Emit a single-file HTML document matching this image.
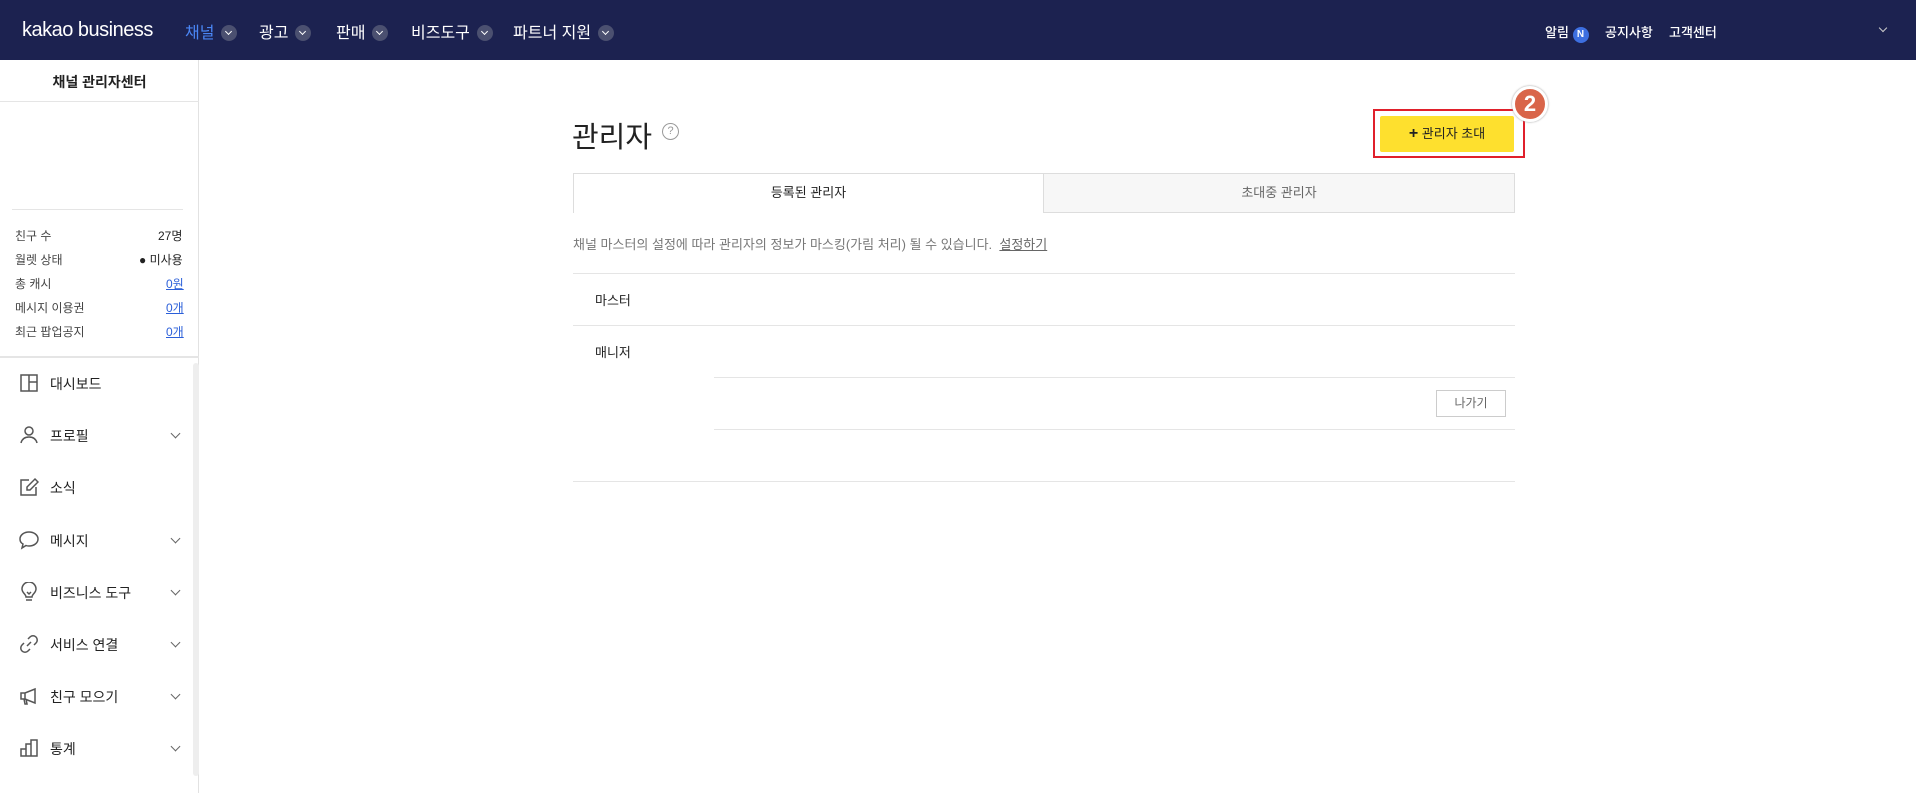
<!DOCTYPE html>
<html><head><meta charset="utf-8">
<style>
*{box-sizing:border-box;margin:0;padding:0}
body{width:1916px;height:793px;overflow:hidden;background:#fff;font-family:"Liberation Sans","Noto Sans CJK KR",sans-serif;color:#222;position:relative}
.a{position:absolute;white-space:nowrap}
.hdr{position:absolute;left:0;top:0;width:1916px;height:60px;background:#1c2250}
.nav{color:#fff;font-size:16px;top:19px;font-weight:normal}
.cv{display:inline-block;width:16px;height:16px;border-radius:50%;background:#4b5070;vertical-align:-3px;margin-left:7px;position:relative}
.cv:after{content:"";position:absolute;left:5px;top:4px;width:4px;height:4px;border-right:1.5px solid #fff;border-bottom:1.5px solid #fff;transform:rotate(45deg)}
.side{position:absolute;left:0;top:60px;width:199px;height:733px;border-right:1px solid #e2e2e2}
.hl{position:absolute;height:1px;background:#e5e5e5}
.st{font-size:12px;color:#444}
.sv{font-size:12px;color:#222;right:-0}
.u{color:#2b5fd9;text-decoration:underline}
.mi{font-size:14px;color:#222;left:50px;font-weight:normal}
.ic{position:absolute;left:19px;width:20px;height:20px}
.ch{position:absolute;left:172px;width:7px;height:7px;border-right:1.3px solid #666;border-bottom:1.3px solid #666;transform:rotate(45deg)}
</style></head><body>
<div class="hdr"></div>
<div class="a" style="left:22px;top:19px;font-size:20px;color:#fff;font-weight:500;letter-spacing:-0.5px">kakao business</div>
<div class="a nav" style="left:185px;color:#4a86f5">채널<span class="cv"></span></div>
<div class="a nav" style="left:259px">광고<span class="cv"></span></div>
<div class="a nav" style="left:336px">판매<span class="cv"></span></div>
<div class="a nav" style="left:411px">비즈도구<span class="cv"></span></div>
<div class="a nav" style="left:513px">파트너 지원<span class="cv"></span></div>
<div class="a" style="left:1545px;top:22px;color:#fff;font-size:13px;font-weight:500">알림 <span style="display:inline-block;width:16px;height:16px;border-radius:50%;background:#3d6fe0;font-size:10px;text-align:center;line-height:16px;font-weight:bold">N</span></div>
<div class="a" style="left:1605px;top:22px;color:#fff;font-size:13px;font-weight:500">공지사항</div>
<div class="a" style="left:1669px;top:22px;color:#fff;font-size:13px;font-weight:500">고객센터</div>
<div class="a" style="left:1880px;top:25px;width:6px;height:6px;border-right:1.3px solid #ccc;border-bottom:1.3px solid #ccc;transform:rotate(45deg)"></div>

<div class="side"></div>
<div class="a" style="left:0;width:199px;text-align:center;top:72px;font-size:14px;font-weight:bold">채널 관리자센터</div>
<div class="hl" style="left:0;top:101px;width:199px"></div>
<div class="hl" style="left:12px;top:209px;width:171px"></div>
<div class="a st" style="left:15px;top:227px">친구 수</div><div class="a sv" style="left:158px;top:227px">27명</div>
<div class="a st" style="left:15px;top:251px">월렛 상태</div><div class="a sv" style="left:139px;top:251px">● 미사용</div>
<div class="a st" style="left:15px;top:275px">총 캐시</div><div class="a sv u" style="left:166px;top:275px">0원</div>
<div class="a st" style="left:15px;top:299px">메시지 이용권</div><div class="a sv u" style="left:166px;top:299px">0개</div>
<div class="a st" style="left:15px;top:323px">최근 팝업공지</div><div class="a sv u" style="left:166px;top:323px">0개</div>
<div class="hl" style="left:0;top:356px;width:199px;height:2px"></div>
<div class="a" style="left:193px;top:363px;width:6px;height:413px;background:#eee;border-radius:3px"></div>

<svg class="ic" style="top:373px" viewBox="0 0 20 20" fill="none" stroke="#555" stroke-width="1.5"><rect x="2" y="2" width="16" height="16"/><path d="M10 2v16M10 9h8"/></svg>
<div class="a mi" style="top:374px">대시보드</div>
<svg class="ic" style="top:425px" viewBox="0 0 20 20" fill="none" stroke="#555" stroke-width="1.5"><circle cx="10" cy="6" r="4"/><path d="M2 18c1-4 4-6 8-6s7 2 8 6"/></svg>
<div class="a mi" style="top:426px">프로필</div><div class="ch" style="top:430px"></div>
<svg class="ic" style="top:477px" viewBox="0 0 20 20" fill="none" stroke="#555" stroke-width="1.5"><path d="M10 3H2v15h15v-8"/><path d="M16 2l3 3-8 8H8v-3z"/></svg>
<div class="a mi" style="top:478px">소식</div>
<svg class="ic" style="top:530px" viewBox="0 0 20 20" fill="none" stroke="#555" stroke-width="1.5"><path d="M10 2c5 0 9 3 9 7s-4 7-9 7c-1 0-2 0-3-.5L3 18l1-4C2 13 1 11 1 9c0-4 4-7 9-7z"/></svg>
<div class="a mi" style="top:531px">메시지</div><div class="ch" style="top:535px"></div>
<svg class="ic" style="top:582px" viewBox="0 0 20 20" fill="none" stroke="#555" stroke-width="1.5"><path d="M7 15c0-3-4-4-4-8a7 7 0 0114 0c0 4-4 5-4 8zM7 18h6M8 10l2 2 2-2"/></svg>
<div class="a mi" style="top:583px">비즈니스 도구</div><div class="ch" style="top:587px"></div>
<svg class="ic" style="top:634px" viewBox="0 0 20 20" fill="none" stroke="#555" stroke-width="1.5"><path d="M8 12l4-4M9 5l2-2a4 4 0 016 6l-2 2M11 15l-2 2a4 4 0 01-6-6l2-2"/></svg>
<div class="a mi" style="top:635px">서비스 연결</div><div class="ch" style="top:639px"></div>
<svg class="ic" style="top:686px" viewBox="0 0 20 20" fill="none" stroke="#555" stroke-width="1.5"><path d="M2 7h4l10-4v14L6 13H2zM6 7v6M5 13l1 5h2l-1-5"/></svg>
<div class="a mi" style="top:687px">친구 모으기</div><div class="ch" style="top:691px"></div>
<svg class="ic" style="top:738px" viewBox="0 0 20 20" fill="none" stroke="#555" stroke-width="1.5"><path d="M2 18V11h5V6h5V2h6v16zM7 11v7M12 6v12"/></svg>
<div class="a mi" style="top:739px">통계</div><div class="ch" style="top:743px"></div>

<div class="a" style="left:572px;top:114px;font-size:29px;color:#222">관리자</div>
<div class="a" style="left:662px;top:123px;width:17px;height:17px;border:1px solid #999;border-radius:50%;font-size:11px;color:#999;text-align:center;line-height:15px">?</div>
<div class="a" style="left:1373px;top:109px;width:152px;height:49px;border:2px solid #e0202b"></div>
<div class="a" style="left:1380px;top:116px;width:134px;height:36px;background:#fee02e;border-radius:2px;text-align:center;line-height:36px;font-size:13px;color:#222"><b style="font-size:16px">+</b> 관리자 초대</div>
<div class="a" style="left:1512px;top:86px;width:36px;height:36px;border-radius:50%;background:#d9654a;border:3px solid #fff;box-shadow:0 0 2px #999;color:#fff;font-weight:bold;font-size:22px;text-align:center;line-height:30px">2</div>

<div class="a" style="left:573px;top:173px;width:942px;height:40px;border:1px solid #ddd;background:#f7f7f7"></div>
<div class="a" style="left:573px;top:173px;width:471px;height:40px;border:1px solid #ddd;border-bottom:none;background:#fff;text-align:center;line-height:38px;font-size:13px">등록된 관리자</div>
<div class="a" style="left:1044px;top:174px;width:470px;text-align:center;line-height:38px;font-size:13px;color:#666">초대중 관리자</div>
<div class="a" style="left:573px;top:234px;font-size:13px;color:#777">채널 마스터의 설정에 따라 관리자의 정보가 마스킹(가림 처리) 될 수 있습니다. &nbsp;<span style="text-decoration:underline;color:#666">설정하기</span></div>
<div class="hl" style="left:573px;top:273px;width:942px"></div>
<div class="a" style="left:595px;top:290px;font-size:13px">마스터</div>
<div class="hl" style="left:573px;top:325px;width:942px"></div>
<div class="a" style="left:595px;top:342px;font-size:13px">매니저</div>
<div class="hl" style="left:714px;top:377px;width:801px"></div>
<div class="a" style="left:1436px;top:390px;width:70px;height:27px;border:1px solid #ccc;font-size:12px;color:#666;text-align:center;line-height:25px">나가기</div>
<div class="hl" style="left:714px;top:429px;width:801px"></div>
<div class="hl" style="left:573px;top:481px;width:942px"></div>
</body></html>
